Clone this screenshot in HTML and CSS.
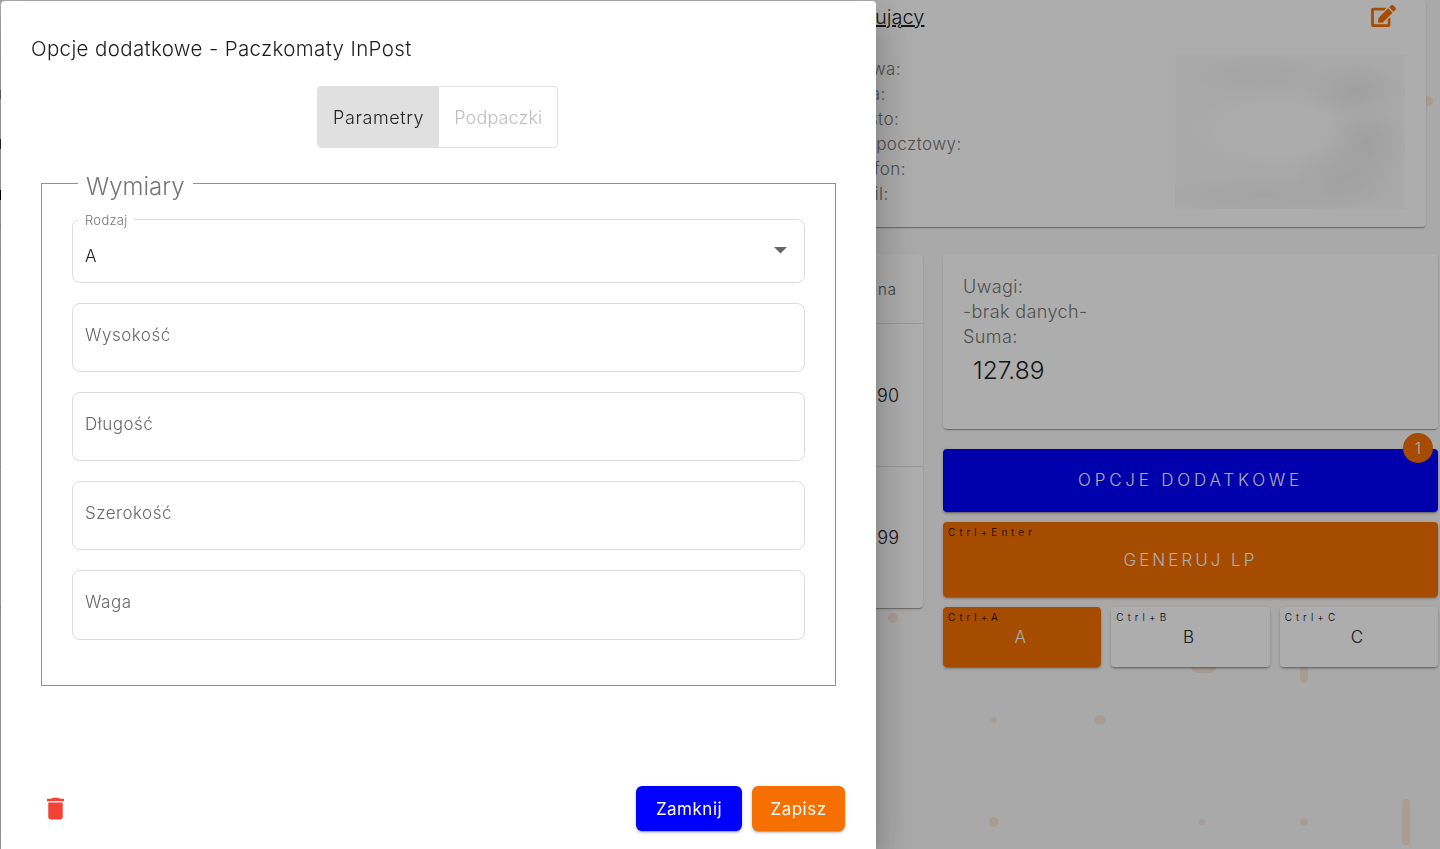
FILE: index.html
```html
<!DOCTYPE html>
<html lang="pl">
<head>
<meta charset="utf-8">
<title>Opcje dodatkowe</title>
<link rel="stylesheet" href="styles.css">
</head>
<body>
<div class="page">
  <span class="dot d1"></span><span class="dot d2"></span><span class="dot d3"></span><span class="dot d4"></span>
  <span class="dot d5"></span><span class="dot d6"></span><span class="dot d7"></span><span class="dot d8"></span>
  <span class="dot d9"></span><span class="dot d10"></span>
  <span class="edge e1"></span><span class="edge e2"></span><span class="edge e3"></span>

  <section class="card buyer">
    <div class="buyer-main">
      <h2 class="buyer-title">Kupujący</h2>
      <div class="buyer-labels">
        <div>Nazwa:</div><div>Ulica:</div><div>Miasto:</div><div>Kod pocztowy:</div><div>Telefon:</div><div>Email:</div>
      </div>
    </div>
    <div class="buyer-side">
      <svg class="edit-icon" viewBox="0 0 576 512"><path d="M402.6 83.2l90.2 90.2c3.8 3.8 3.8 10 0 13.8L274.4 405.6l-92.8 10.3c-12.4 1.4-22.9-9.1-21.5-21.5l10.3-92.8L388.8 83.2c3.8-3.8 10-3.8 13.8 0zm162-22.9l-48.8-48.8c-15.2-15.2-39.9-15.2-55.2 0l-35.4 35.4c-3.8 3.8-3.8 10 0 13.8l90.2 90.2c3.8 3.8 10 3.8 13.8 0l35.4-35.4c15.2-15.3 15.2-40 0-55.2zM384 346.2V448H64V128h229.8c3.2 0 6.2-1.3 8.5-3.5l40-40c7.6-7.6 2.2-20.5-8.5-20.5H48C21.5 64 0 85.5 0 112v352c0 26.5 21.5 48 48 48h352c26.5 0 48-21.5 48-48V306.2c0-10.7-12.9-16-20.5-8.5l-40 40c-2.2 2.3-3.5 5.3-3.5 8.5z"/></svg>
      <div class="blurred"><div class="blur-ink"></div></div>
    </div>
  </section>

  <div class="lower">
    <section class="card items">
      <div class="item-row item-head">Cena</div>
      <div class="item-row item-val">39.90</div>
      <div class="item-row item-val">87.99</div>
    </section>
    <div class="side">
      <section class="card notes">
        <div class="note-line">Uwagi:</div>
        <div class="note-line">-brak danych-</div>
        <div class="note-line">Suma:</div>
        <div class="total">127.89</div>
      </section>
      <div class="extra-wrap">
        <button class="btn-big btn-blue">Opcje dodatkowe</button>
        <span class="badge">1</span>
      </div>
      <button class="btn-big btn-orange btn-gen"><span class="hint">Ctrl+Enter</span>Generuj LP</button>
      <div class="choice-row">
        <button class="choice choice-on"><span class="hint">Ctrl+A</span>A</button>
        <button class="choice"><span class="hint">Ctrl+B</span>B</button>
        <button class="choice"><span class="hint">Ctrl+C</span>C</button>
      </div>
    </div>
  </div>
</div>

<div class="overlay"></div>

<div class="modal">
  <h1 class="modal-title">Opcje dodatkowe - Paczkomaty InPost</h1>
  <div class="tabs">
    <div class="tab tab-on">Parametry</div>
    <div class="tab">Podpaczki</div>
  </div>
  <fieldset class="dims">
    <legend class="dims-legend">Wymiary</legend>
    <div class="field field-select">
      <span class="field-label">Rodzaj</span>
      <span class="select-value">A</span>
      <svg class="select-arrow" viewBox="0 0 13 7"><path d="M0 0h13L6.500 6.500z"/></svg>
    </div>
    <div class="field field-a">Wysokość</div>
    <div class="field field-a">Długość</div>
    <div class="field field-a">Szerokość</div>
    <div class="field field-b">Waga</div>
  </fieldset>
  <div class="modal-foot">
    <svg class="trash" viewBox="0 0 24 24"><path d="M6 19c0 1.100.9 2 2 2h8c1.100 0 2-.9 2-2V7H6v12zM19 4h-3.500l-1-1h-5l-1 1H5v2h14V4z"/></svg>
    <div class="foot-actions">
      <button class="act act-blue">Zamknij</button>
      <button class="act act-orange">Zapisz</button>
    </div>
  </div>
</div>
</body>
</html>
```
FILE: styles.css
```css
* { box-sizing: border-box; }
html, body { margin: 0; height: 100%; overflow: hidden; }
body { font-family: Inter, "Noto Sans", sans-serif; font-weight: 300; color: #1c1c1c; background: #fafafa; }
button { font-family: inherit; font-weight: 300; border: 0; cursor: pointer; }

.page { position: relative; width: 1440px; height: 849px; overflow: hidden; }
.dot { position: absolute; background: #f57000; opacity: .14; border-radius: 8px; }
.d1 { left: 888px; top: 613px; width: 10px; height: 10px; }
.d2 { left: 991px; top: 717px; width: 6px; height: 6px; }
.d3 { left: 1095px; top: 715px; width: 10px; height: 10px; }
.d4 { left: 989px; top: 817px; width: 10px; height: 10px; }
.d5 { left: 1199px; top: 819px; width: 6px; height: 6px; }
.d6 { left: 1300px; top: 818px; width: 8px; height: 8px; }
.d7 { left: 1423px; top: 96px; width: 10px; height: 10px; }
.d8 { left: 1190px; top: 650px; width: 27px; height: 23px; }
.d9 { left: 1300px; top: 650px; width: 8px; height: 33px; }
.d10 { left: 1402px; top: 799px; width: 8px; height: 46px; }
.edge { position: absolute; left: 0; width: 1px; z-index: 1; background: #222; }
.e1 { top: 90px; height: 9px; background: #555; }
.e2 { top: 139px; height: 10px; }
.e3 { top: 190px; height: 10px; background: #000; }

.card { position: relative; background: #fff; border-radius: 4px; box-shadow: 0 2px 1px -1px rgba(0,0,0,.2), 0 1px 1px 0 rgba(0,0,0,.14), 0 1px 3px 0 rgba(0,0,0,.12); }

.buyer { width: 1426px; height: 227px; display: flex; justify-content: space-between; padding: 2px 21px 0 839px; }
.buyer-title { margin: 0; font-size: 20px; line-height: 30px; font-weight: 300; text-decoration: underline; color: #222; }
.buyer-labels { margin-top: 25px; font-size: 17px; line-height: 25px; color: #757575; letter-spacing: .43px; }
.buyer-side { width: 230px; display: flex; flex-direction: column; align-items: flex-end; }
.edit-icon { width: 25px; height: 22px; margin: 3px 9px 0 0; fill: #f57000; }
.blurred { width: 230px; height: 154px; margin-top: 28px; overflow: hidden; background: #fafafa; }
.blur-ink { width: 100%; height: 100%; background:
  radial-gradient(ellipse 50px 30px at 180px 35px, #ebebeb, transparent),
  radial-gradient(ellipse 42px 42px at 192px 88px, #ebebeb, transparent),
  radial-gradient(ellipse 55px 34px at 172px 122px, #ededed, transparent),
  radial-gradient(ellipse 90px 26px at 85px 20px, #f2f2f2, transparent),
  radial-gradient(ellipse 130px 24px at 90px 140px, #f1f1f1, transparent),
  radial-gradient(ellipse 90px 40px at 100px 75px, #ffffff, transparent); }

.lower { display: flex; gap: 20px; margin-top: 27px; }
.items { width: 923px; height: 354px; flex: none; }
.item-row { display: flex; align-items: center; justify-content: flex-end; padding-right: 26px; border-bottom: 1px solid #e0e0e0; }
.item-row:last-child { border-bottom: 0; padding-bottom: 2px; }
.item-head { height: 70px; padding-top: 1px; font-size: 15px; color: #555; letter-spacing: 1px; }
.item-val { height: 143px; font-size: 18px; color: #222; padding-right: 24px; }

.side { width: 495px; flex: none; display: flex; flex-direction: column; }
.notes { height: 175px; padding: 20px; font-size: 18px; color: #757575; }
.note-line { line-height: 25px; letter-spacing: .4px; }
.total { font-size: 24.500px; line-height: 36px; color: #222; margin: 3px 0 0 10px; }
.extra-wrap { position: relative; margin-top: 20px; }
.badge { position: absolute; right: 5px; top: -16px; width: 30px; height: 30px; border-radius: 50%; background: #f57000; color: #fff; font-size: 16px; display: flex; align-items: center; justify-content: center; }
.btn-big { position: relative; display: block; width: 100%; border-radius: 4px; color: #fff; text-transform: uppercase; font-size: 17px; font-weight: 300; box-shadow: 0 3px 1px -2px rgba(0,0,0,.2), 0 2px 2px 0 rgba(0,0,0,.14), 0 1px 5px 0 rgba(0,0,0,.12); }
.btn-blue { height: 63px; background: #0000ff; letter-spacing: 3.800px; padding-bottom: 3px; }
.btn-orange { background: #f57000; }
.btn-gen { height: 75px; margin-top: 10px; padding-top: 2px; letter-spacing: 3px; }
.hint { position: absolute; left: 5px; top: 5px; font-size: 10px; line-height: 10px; letter-spacing: 4.100px; color: #000; text-transform: none; font-weight: 300; }
.choice-row { display: grid; grid-template-columns: repeat(3, 1fr); gap: 10px; margin-top: 10px; }
.choice { position: relative; height: 60px; background: #fff; color: #222; border-radius: 4px; font-size: 17px; padding: 0 4px 0 0; box-shadow: 0 3px 1px -2px rgba(0,0,0,.2), 0 2px 2px 0 rgba(0,0,0,.14), 0 1px 5px 0 rgba(0,0,0,.12); }
.choice-on { background: #f57000; color: #fff; }

.overlay { position: fixed; inset: 0; background: rgba(0,0,0,.32); }

.modal { position: fixed; left: 1px; top: 1px; width: 875px; height: 848px; padding: 33px 31px 18px 30px; background: #fff; border-radius: 4px 4px 0 0; display: flex; flex-direction: column; box-shadow: 0 11px 15px -7px rgba(0,0,0,.2), 0 24px 38px 3px rgba(0,0,0,.14), 0 9px 46px 8px rgba(0,0,0,.12); }
.modal-title { margin: 0; font-size: 20.500px; line-height: 30px; font-weight: 300; color: #1c1c1c; letter-spacing: .36px; }
.tabs { display: flex; align-self: flex-start; margin: 22px 0 0 286px; height: 62px; border: 1px solid #e0e0e0; border-radius: 4px; overflow: hidden; }
.tab { display: flex; align-items: center; padding: 0 15px; font-size: 18px; color: #bdbdbd; letter-spacing: .15px; }
.tab-on { background: #e0e0e0; color: #222; letter-spacing: .6px; }

.dims { margin: 13px 9px 0 10px; padding: 14px 30px 0; height: 525px; min-width: 0; border: 1px solid #8f8f96; }
.dims-legend { margin-left: 6px; padding: 8px 8px 0; font-size: 24px; line-height: 36px; color: #757575; }
.field { position: relative; display: flex; align-items: center; padding: 0 12px 6px; border: 1px solid #dcdcdc; border-radius: 8px; margin-bottom: 20px; font-size: 17px; color: #666; letter-spacing: .5px; }
.field-select { height: 64px; padding: 10px 17px 0 12px; justify-content: space-between; color: #222; letter-spacing: 0; }
.field-a { height: 69px; }
.field-b { height: 70px; }
.field-label { position: absolute; left: 5px; top: -7px; padding: 0 6px 0 7px; background: #fff; font-size: 13px; line-height: 14px; color: #757575; letter-spacing: .3px; }
.select-arrow { width: 13px; height: 7px; margin: -12px 0 0; fill: #666; }

.modal-foot { margin-top: auto; display: flex; justify-content: space-between; align-items: center; }
.trash { width: 29px; height: 29px; margin: 0 0 0 10px; fill: #f44336; }
.foot-actions { display: flex; gap: 10px; }
.act { height: 45px; border-radius: 6px; color: #fff; font-size: 17px; font-weight: 400; letter-spacing: .5px; box-shadow: 0 3px 1px -2px rgba(0,0,0,.2), 0 2px 2px 0 rgba(0,0,0,.14), 0 1px 5px 0 rgba(0,0,0,.12); }
.act-blue { width: 106px; background: #0000ff; }
.act-orange { width: 93px; background: #f57000; }
```
